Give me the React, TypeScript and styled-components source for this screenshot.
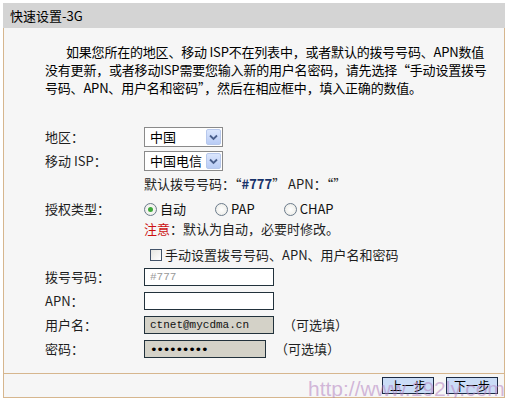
import React from 'react';
import styled, { createGlobalStyle } from 'styled-components';

const GlobalStyle = createGlobalStyle`
  html, body {
    margin: 0;
    padding: 0;
    background: #ffffff;
  }
  body {
    font-family: "Noto Sans CJK SC", "Noto Sans", sans-serif;
    font-size: 13px;
    color: #111;
  }
`;

const Page = styled.div`
  position: relative;
  width: 502px;
  padding: 3px 0 0 3px;
`;

const TitleBar = styled.div`
  height: 25px;
  line-height: 25px;
  padding-left: 7px;
  background: #d4d4d4;
  font-size: 13px;
  color: #000;
`;

const Panel = styled.div`
  background: #f6f6f6;
  border-left: 1px solid #d6b68e;
  border-right: 1px solid #d6b68e;
`;

const Intro = styled.div`
  padding: 15px 0 0 41px;
  font-size: 13px;
  color: #000;
`;

const IntroLine = styled.div<{ $indent?: boolean }>`
  height: 18px;
  line-height: 18px;
  white-space: nowrap;
  padding-left: ${p => (p.$indent ? 21 : 0)}px;
  letter-spacing: -0.2px;
`;

const Form = styled.div`
  display: flex;
  flex-direction: column;
  padding: 30px 0 14px 41px;
`;

const Row = styled.div<{ $top?: number }>`
  display: flex;
  align-items: center;
  height: 20px;
  line-height: 20px;
  margin-top: ${p => p.$top ?? 0}px;
`;

const Label = styled.div`
  width: 99px;
  flex-shrink: 0;
  color: #1e1e1e;
`;

const Spacer = styled.div`
  width: 99px;
  flex-shrink: 0;
`;

const Select = styled.div`
  display: flex;
  align-items: center;
  justify-content: space-between;
  box-sizing: border-box;
  width: 79px;
  height: 20px;
  padding: 1px 1px 1px 5px;
  background: #fff;
  border: 1px solid #8a8a8a;
  font-size: 13px;
  color: #000;
`;

const SelectArrow = styled.div`
  width: 15px;
  height: 16px;
  box-sizing: border-box;
  border: 1px solid #b7c8ec;
  border-radius: 2px;
  background: linear-gradient(#dbe6fd, #b9ccf5);
  display: flex;
  align-items: center;
  justify-content: center;
`;

const Info = styled.div`
  color: #1e1e1e;
  white-space: nowrap;
`;

const Strong = styled.b`
  color: #17326a;
`;

const Warn = styled.span`
  color: #cc1010;
`;

const RadioItem = styled.label`
  display: flex;
  align-items: center;
  gap: 3px;
  margin-right: 29px;
  &:first-child {
    margin-left: 5px;
  }
`;

const RadioDot = styled.span<{ $checked?: boolean }>`
  width: 13px;
  height: 13px;
  box-sizing: border-box;
  border-radius: 50%;
  border: 1px solid #6b7b8c;
  background: radial-gradient(circle, #fff 0, #e8e8e2 100%);
  display: flex;
  align-items: center;
  justify-content: center;
  &::after {
    content: '';
    display: ${p => (p.$checked ? 'block' : 'none')};
    width: 5px;
    height: 5px;
    border-radius: 50%;
    background: #3ea83a;
  }
`;

const Check = styled.span`
  width: 12px;
  height: 12px;
  box-sizing: border-box;
  margin: 0 3px 0 6px;
  border: 1px solid #44546a;
  background: linear-gradient(135deg, #e6e6e0, #fff);
`;

const TextInput = styled.input<{ $width?: number; $disabled?: boolean }>`
  box-sizing: border-box;
  width: ${p => p.$width ?? 130}px;
  height: 18px;
  margin: 0;
  padding: 0 5px;
  border: 1px solid #22323c;
  background: ${p => (p.$disabled ? '#d4d2c8' : '#fff')};
  font-family: "Liberation Mono", monospace;
  font-size: 11px;
  color: #111;
  outline: none;
  &[type='password'] {
    font-family: "DejaVu Sans", sans-serif;
    font-size: 13px;
    letter-spacing: -1.3px;
    color: #000;
  }
  &::placeholder {
    color: #999;
  }
`;

const Hint = styled.span`
  margin-left: 9px;
  color: #1e1e1e;
`;

const Footer = styled.div`
  display: flex;
  justify-content: flex-end;
  align-items: center;
  gap: 12px;
  height: 23px;
  padding-right: 6px;
  border-top: 1px solid #d6b68e;
  border-bottom: 1px solid #d6b68e;
`;

const Button = styled.button`
  box-sizing: border-box;
  width: 52px;
  height: 17px;
  padding: 0;
  border: 1px solid #1c2b44;
  background: #cadcf6;
  font-family: "Noto Sans CJK SC", sans-serif;
  font-size: 12px;
  line-height: 15px;
  color: #000;
`;

const Watermark = styled.div`
  position: absolute;
  left: 308px;
  top: 377px;
  font-family: "Liberation Sans", Arial, sans-serif;
  font-size: 21px;
  line-height: 24px;
  color: rgba(178, 128, 190, 0.55);
  pointer-events: none;
  white-space: nowrap;
`;

const Chevron = () => (
  <svg width="9" height="7" viewBox="0 0 9 7">
    <path d="M1 1.5 L4.5 5 L8 1.5" fill="none" stroke="#4a5f8c" strokeWidth="1.8" />
  </svg>
);

export default function App() {
  return (
    <>
      <GlobalStyle />
      <Page>
        <TitleBar>快速设置-3G</TitleBar>
        <Panel>
          <Intro>
            <IntroLine $indent>如果您所在的地区、移动 ISP不在列表中，或者默认的拨号号码、APN数值</IntroLine>
            <IntroLine>没有更新，或者移动ISP需要您输入新的用户名密码，请先选择“手动设置拨号</IntroLine>
            <IntroLine>号码、APN、用户名和密码”，然后在相应框中，填入正确的数值。</IntroLine>
          </Intro>
          <Form>
            <Row>
              <Label>地区：</Label>
              <Select>
                中国
                <SelectArrow><Chevron /></SelectArrow>
              </Select>
            </Row>
            <Row $top={4}>
              <Label>移动 ISP：</Label>
              <Select>
                中国电信
                <SelectArrow><Chevron /></SelectArrow>
              </Select>
            </Row>
            <Row $top={3}>
              <Spacer />
              <Info>
                默认拨号号码：“<Strong>#777</Strong>” APN：“”
              </Info>
            </Row>
            <Row $top={5}>
              <Label>授权类型：</Label>
              <RadioItem><RadioDot $checked />自动</RadioItem>
              <RadioItem><RadioDot />PAP</RadioItem>
              <RadioItem><RadioDot />CHAP</RadioItem>
            </Row>
            <Row>
              <Spacer />
              <Info><Warn>注意</Warn>：默认为自动，必要时修改。</Info>
            </Row>
            <Row $top={6}>
              <Spacer />
              <Check />
              <Info>手动设置拨号号码、APN、用户名和密码</Info>
            </Row>
            <Row $top={2}>
              <Label>拨号号码：</Label>
              <TextInput placeholder="#777" readOnly />
            </Row>
            <Row $top={4}>
              <Label>APN：</Label>
              <TextInput readOnly />
            </Row>
            <Row $top={4}>
              <Label>用户名：</Label>
              <TextInput $disabled value="ctnet@mycdma.cn" readOnly />
              <Hint>（可选填）</Hint>
            </Row>
            <Row $top={4}>
              <Label>密码：</Label>
              <TextInput $disabled $width={122} type="password" value="ctnet1234" readOnly />
              <Hint>（可选填）</Hint>
            </Row>
          </Form>
          <Footer>
            <Button>上一步</Button>
            <Button>下一步</Button>
          </Footer>
        </Panel>
        <Watermark>http://www.192ly.com</Watermark>
      </Page>
    </>
  );
}
